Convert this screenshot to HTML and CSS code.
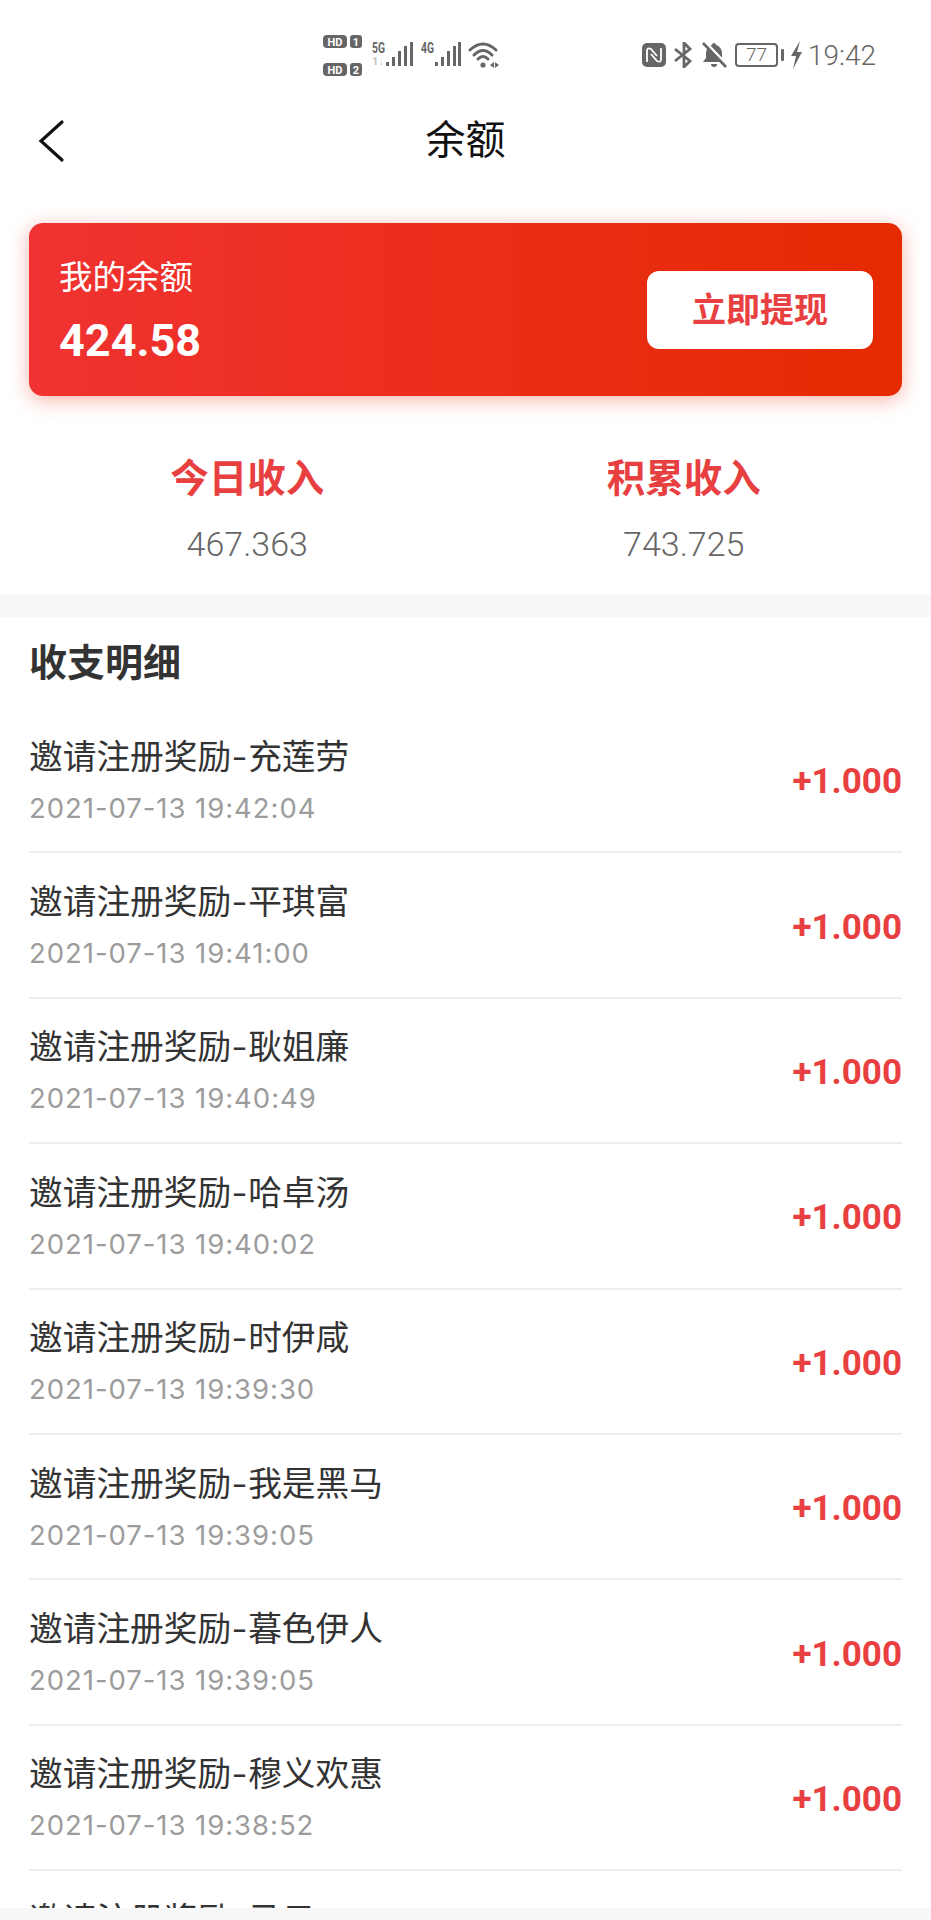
FILE: index.html
```html
<!DOCTYPE html>
<html lang="zh-CN">
<head>
    <meta charset="UTF-8">
    <meta name="viewport" content="width=device-width, initial-scale=1.0">
    <title>余额</title>
    <link rel="stylesheet" href="styles.css">
</head>
<body>
    <div class="page">
        <!-- 状态栏 -->
        <div class="status-bar">
            <svg class="net-icons" width="178" height="44" viewBox="0 0 178 44">
                <rect x="0" y="2" width="24" height="13" rx="4" fill="#666"/>
                <text x="12" y="13" class="badge-text" text-anchor="middle">HD</text>
                <rect x="27" y="2" width="12" height="13" rx="3" fill="#666"/>
                <text x="33" y="13" class="badge-text" text-anchor="middle">1</text>
                <rect x="0" y="30" width="24" height="13" rx="4" fill="#666"/>
                <text x="12" y="41" class="badge-text" text-anchor="middle">HD</text>
                <rect x="27" y="30" width="12" height="13" rx="3" fill="#666"/>
                <text x="33" y="41" class="badge-text" text-anchor="middle">2</text>

                <text x="49" y="20" class="net-text" textLength="13" lengthAdjust="spacingAndGlyphs">5G</text>
                <text x="49" y="32" class="net-text net-text-dim" textLength="12" lengthAdjust="spacingAndGlyphs">1↓</text>
                <g fill="#666">
                    <rect x="63" y="29" width="3" height="4"/>
                    <rect x="69" y="24" width="3" height="9"/>
                    <rect x="75" y="18" width="3" height="15"/>
                    <rect x="81" y="13" width="3" height="20"/>
                    <rect x="87" y="9" width="3" height="24"/>
                </g>

                <text x="98" y="20" class="net-text" textLength="13" lengthAdjust="spacingAndGlyphs">4G</text>
                <g fill="#666">
                    <rect x="112" y="29" width="3" height="4"/>
                    <rect x="118" y="24" width="3" height="9"/>
                    <rect x="124" y="18" width="3" height="15"/>
                    <rect x="130" y="13" width="3" height="20"/>
                    <rect x="135" y="9" width="3" height="24"/>
                </g>

                <g fill="none" stroke="#666" stroke-width="3" stroke-linecap="round">
                    <path d="M147 17 Q160 5 173 17"/>
                    <path d="M151 22 Q160 13 169 22"/>
                    <path d="M155 26 Q160 21 165 26"/>
                </g>
                <circle cx="160" cy="32" r="2.6" fill="#666"/>
                <path d="M167 32 l4 -3 v6 z M172 29 l4 3 -4 3 z" fill="#666"/>
            </svg>

            <div class="sys-icons">
                <svg width="24" height="24" viewBox="0 0 24 24">
                    <rect width="24" height="24" rx="5" fill="#666"/>
                    <path d="M5 19 V8 Q5 4 9 6 L15 13" fill="none" stroke="#fff" stroke-width="1.8"/>
                    <path d="M19 5 V16 Q19 20 15 18 L9 11" fill="none" stroke="#fff" stroke-width="1.8"/>
                </svg>
                <svg width="20" height="26" viewBox="0 0 20 26">
                    <path d="M1 7 L16 19 L10 25 V1 L16 7 L1 19" fill="none" stroke="#666" stroke-width="2.8"/>
                </svg>
                <svg width="25" height="26" viewBox="0 0 25 26">
                    <path d="M12 1 a2 2 0 0 1 2 2 c4 1 6 5 6 8 v5 l3 4 H1 l3 -4 v-5 c0 -3 2 -7 6 -8 a2 2 0 0 1 2 -2 Z" fill="#666"/>
                    <path d="M9 22 a3 3 0 0 0 6 0 Z" fill="#666"/>
                    <path d="M3 0 L25 23" stroke="#fff" stroke-width="3"/>
                    <path d="M1 1 L24 25" stroke="#666" stroke-width="2.6"/>
                </svg>
                <div class="battery">
                    <div class="battery-body">77</div>
                    <div class="battery-nub"></div>
                </div>
                <svg width="13" height="28" viewBox="0 0 13 28">
                    <path d="M10 0 L1 15 H6 L3 28 L12 11 H7 Z" fill="#666"/>
                </svg>
                <span class="clock">19:42</span>
            </div>
        </div>

        <!-- 顶部导航 -->
        <div class="nav-bar">
            <svg class="nav-back" width="30" height="44" viewBox="0 0 30 44">
                <path d="M24 3 L3 22 L24 41" fill="none" stroke="#111" stroke-width="3.2" stroke-linecap="round"/>
            </svg>
            <div class="nav-title">余额</div>
        </div>

        <!-- 余额卡片 -->
        <div class="balance-card">
            <div class="balance-info">
                <div class="balance-label">我的余额</div>
                <div class="balance-num">424.58</div>
            </div>
            <div class="withdraw-btn">立即提现</div>
        </div>

        <!-- 收入统计 -->
        <div class="stats">
            <div class="stat-item">
                <div class="stat-label">今日收入</div>
                <div class="stat-num">467.363</div>
            </div>
            <div class="stat-item">
                <div class="stat-label">积累收入</div>
                <div class="stat-num">743.725</div>
            </div>
        </div>

        <div class="band"></div>

        <!-- 收支明细 -->
        <div class="detail">
            <div class="detail-title">收支明细</div>
            <div class="record">
                <div>
                    <div class="record-name">邀请注册奖励<span class="dash">-</span>充莲劳</div>
                    <div class="record-time">2021-07-13 19:42:04</div>
                </div>
                <div class="record-amount">+1.000</div>
            </div>
            <div class="record">
                <div>
                    <div class="record-name">邀请注册奖励<span class="dash">-</span>平琪富</div>
                    <div class="record-time">2021-07-13 19:41:00</div>
                </div>
                <div class="record-amount">+1.000</div>
            </div>
            <div class="record">
                <div>
                    <div class="record-name">邀请注册奖励<span class="dash">-</span>耿姐廉</div>
                    <div class="record-time">2021-07-13 19:40:49</div>
                </div>
                <div class="record-amount">+1.000</div>
            </div>
            <div class="record">
                <div>
                    <div class="record-name">邀请注册奖励<span class="dash">-</span>哈卓汤</div>
                    <div class="record-time">2021-07-13 19:40:02</div>
                </div>
                <div class="record-amount">+1.000</div>
            </div>
            <div class="record">
                <div>
                    <div class="record-name">邀请注册奖励<span class="dash">-</span>时伊咸</div>
                    <div class="record-time">2021-07-13 19:39:30</div>
                </div>
                <div class="record-amount">+1.000</div>
            </div>
            <div class="record">
                <div>
                    <div class="record-name">邀请注册奖励<span class="dash">-</span>我是黑马</div>
                    <div class="record-time">2021-07-13 19:39:05</div>
                </div>
                <div class="record-amount">+1.000</div>
            </div>
            <div class="record">
                <div>
                    <div class="record-name">邀请注册奖励<span class="dash">-</span>暮色伊人</div>
                    <div class="record-time">2021-07-13 19:39:05</div>
                </div>
                <div class="record-amount">+1.000</div>
            </div>
            <div class="record">
                <div>
                    <div class="record-name">邀请注册奖励<span class="dash">-</span>穆义欢惠</div>
                    <div class="record-time">2021-07-13 19:38:52</div>
                </div>
                <div class="record-amount">+1.000</div>
            </div>
            <div class="record record-last">
                <div class="record-name">邀请注册奖励<span class="dash">-</span>马云</div>
            </div>
        </div>

        <div class="bottom-strip"></div>
    </div>
</body>
</html>
```

FILE: styles.css
```css
* {
    margin: 0;
    padding: 0;
    box-sizing: border-box;
}

body {
    background: #fff;
    font-family: Roboto, "Noto Sans CJK SC", sans-serif;
}

.page {
    position: relative;
    width: 931px;
    height: 1920px;
    overflow: hidden;
}

/* 状态栏 */
.status-bar {
    display: flex;
    align-items: center;
    height: 90px;
    padding: 20px 55px 0 323px;
}

.badge-text {
    font: 700 11px Roboto, sans-serif;
    fill: #fff;
}

.net-text {
    font: 700 14px Roboto, sans-serif;
    fill: #666;
}

.net-text-dim {
    fill: #c4c4c4;
    font-size: 10px;
}

.sys-icons {
    display: flex;
    align-items: center;
    margin-left: auto;
    gap: 8px;
}

.battery {
    display: flex;
    align-items: center;
    gap: 3px;
    margin-right: -2px;
}

.battery-body {
    width: 43px;
    height: 24px;
    border: 2px solid #666;
    border-radius: 4px;
    color: #666;
    font-size: 19px;
    font-weight: 300;
    line-height: 20px;
    text-align: center;
}

.battery-nub {
    width: 3px;
    height: 12px;
    background: #666;
    border-radius: 1px;
}

.clock {
    color: #666;
    font-size: 28px;
    font-weight: 300;
    margin-left: -3px;
}

/* 导航 */
.nav-bar {
    position: relative;
    display: flex;
    align-items: center;
    justify-content: center;
    height: 100px;
    padding-bottom: 6px;
}

.nav-back {
    position: absolute;
    left: 38px;
    top: 29px;
}

.nav-title {
    font-size: 40px;
    color: #111;
}

/* 余额卡片 */
.balance-card {
    display: flex;
    align-items: center;
    justify-content: space-between;
    height: 173px;
    margin: 33px 29px 0;
    padding: 0 29px 0 30px;
    border-radius: 14px;
    background: linear-gradient(90deg, #f03232 0%, #e52a00 100%);
    box-shadow: 0 4px 20px rgba(235, 60, 30, 0.38);
}

.balance-info {
    padding-top: 4px;
}

.balance-label {
    color: #fff;
    font-size: 33.5px;
    line-height: 44px;
}

.balance-num {
    margin-top: 14px;
    color: #fff;
    font-size: 45px;
    line-height: 54px;
    font-weight: 700;
}

.withdraw-btn {
    width: 226px;
    height: 78px;
    border-radius: 12px;
    background: #fff;
    color: #e84040;
    font-size: 34px;
    font-weight: 700;
    line-height: 78px;
    text-align: center;
}

/* 收入统计 */
.stats {
    display: flex;
    height: 198px;
    padding: 0 29px;
}

.stat-item {
    flex: 1;
    padding-top: 55px;
    text-align: center;
}

.stat-label {
    color: #e84040;
    font-size: 38.5px;
    line-height: 56px;
    font-weight: 700;
}

.stat-num {
    margin-top: 15px;
    color: #666;
    font-size: 34px;
    line-height: 44px;
    font-weight: 300;
}

.band {
    height: 23px;
    background: #f7f7f7;
}

/* 收支明细 */
.detail {
    padding: 0 29px;
}

.detail-title {
    height: 91px;
    padding-top: 20px;
    color: #333;
    font-size: 38px;
    line-height: 52px;
    font-weight: 700;
}

.record {
    display: flex;
    align-items: center;
    justify-content: space-between;
    height: 145.4px;
    padding-top: 2px;
    border-bottom: 2px solid #eee;
}

.record-last {
    display: block;
    padding-top: 27px;
    border-bottom: 0;
}

.record-name {
    color: #333;
    font-size: 33.7px;
    line-height: 46px;
}

.dash {
    display: inline-block;
    width: 17px;
    text-align: center;
    transform: scaleX(1.4);
}

.record-time {
    margin-top: 8px;
    color: #9c9c9c;
    font-family: Inter, sans-serif;
    font-size: 27.5px;
    line-height: 38px;
    letter-spacing: 0.95px;
}

.record-amount {
    margin-top: 2px;
    color: #e84040;
    font-size: 35px;
    font-weight: 700;
}

.bottom-strip {
    position: absolute;
    left: 0;
    right: 0;
    bottom: 0;
    height: 12px;
    background: #f7f7f7;
}
```
